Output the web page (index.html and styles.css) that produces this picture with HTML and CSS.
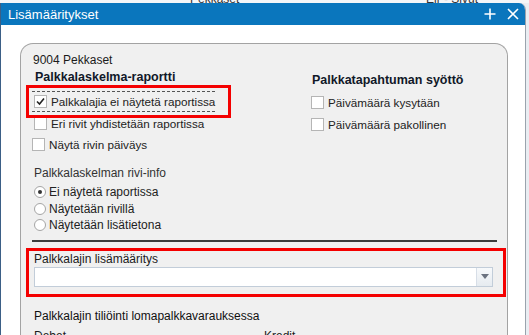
FILE: index.html
```html
<!DOCTYPE html>
<html lang="fi">
<head>
<meta charset="utf-8">
<title>Lisämääritykset</title>
<link rel="stylesheet" href="styles.css">
</head>
<body>
<div class="behind">
  <span class="behind-a">Pekkaset</span>
  <span class="behind-b">Eir - Sivut</span>
</div>
<div class="dialog">
  <div class="titlebar">
    <span class="title">Lisämääritykset</span>
    <span class="actions">
      <svg class="ico" width="12" height="12" viewBox="0 0 12 12"><path d="M6 0.5V11.5M0.5 6H11.5" stroke="#fff" stroke-width="1.6"/></svg>
      <svg class="ico" width="12" height="12" viewBox="0 0 12 12"><path d="M1 1L11 11M11 1L1 11" stroke="#fff" stroke-width="1.6"/></svg>
    </span>
  </div>
  <div class="dbody">
    <div class="panel">
      <div class="code">9004 Pekkaset</div>
      <div class="cols">
        <div class="col-left">
          <div class="heading">Palkkalaskelma-raportti</div>
          <div class="check focus"><span class="box"><svg width="11" height="11" viewBox="0 0 11 11"><path d="M2 5.5L4.5 8L9 2.5" fill="none" stroke="#222" stroke-width="1.6"/></svg></span>Palkkalajia ei näytetä raportissa</div>
          <div class="check"><span class="box"></span>Eri rivit yhdistetään raportissa</div>
          <div class="check shift"><span class="box"></span>Näytä rivin päiväys</div>
          <div class="sub">Palkkalaskelman rivi-info</div>
          <div class="radio"><span class="rb on"></span>Ei näytetä raportissa</div>
          <div class="radio"><span class="rb"></span>Näytetään rivillä</div>
          <div class="radio"><span class="rb"></span>Näytetään lisätietona</div>
        </div>
        <div class="col-right">
          <div class="heading">Palkkatapahtuman syöttö</div>
          <div class="check"><span class="box"></span>Päivämäärä kysytään</div>
          <div class="check"><span class="box"></span>Päivämäärä pakollinen</div>
        </div>
      </div>
      <div class="sep"></div>
      <div class="field-label">Palkkalajin lisämääritys</div>
      <div class="combo">
        <div class="combo-input"></div>
        <div class="combo-btn"><svg width="8" height="5" viewBox="0 0 8 5"><path d="M0 0H8L4 5Z" fill="#6b7280"/></svg></div>
      </div>
      <div class="section">Palkkalajin tiliöinti lomapalkkavarauksessa</div>
      <div class="dk-row"><span class="dk-left">Debet</span><span>Kredit</span></div>
    </div>
  </div>
</div>
<div class="hl hl-one"></div>
<div class="hl hl-two"></div>
</body>
</html>
```

FILE: styles.css
```css
* { box-sizing: border-box; }
html, body { margin: 0; padding: 0; }
body {
  width: 529px;
  height: 335px;
  overflow: hidden;
  background: #e9edf2;
  font-family: "Liberation Sans", Arial, sans-serif;
  font-size: 12px;
  color: #1b1b1b;
  position: relative;
}
.behind {
  height: 3px;
  position: relative;
  overflow: hidden;
  background: #f4f6f8;
  font-size: 12px;
  color: #333;
}
.behind-a { position: absolute; left: 190px; top: -8px; }
.behind-b { position: absolute; left: 426px; top: -8px; }
.dialog {
  width: 526px;
  height: 332px;
  background: #fff;
  border-left: 1px solid #3b5f86;
  border-right: 1px solid #9aa3ad;
  border-top-right-radius: 7px;
  overflow: hidden;
  display: flex;
  flex-direction: column;
}
.titlebar {
  height: 22px;
  flex: none;
  background: #0a76bd;
  color: #fff;
  display: flex;
  align-items: center;
  justify-content: space-between;
  padding: 0 6px 0 7px;
}
.title { font-size: 13px; }
.actions { display: flex; gap: 11px; align-items: center; }
.ico { display: block; }
.dbody {
  flex: 1;
  padding: 18px 17px 0 19px;
}
.panel {
  height: 100%;
  background: #f0f0f0;
  border: 1px solid #a3a3a3;
  border-bottom: none;
  border-radius: 13px 13px 0 0;
  padding: 8px 10px 0 13px;
}
.code { height: 16px; line-height: 16px; margin-left: -1px; }
.cols { display: flex; }
.col-left { width: 277px; display: flex; flex-direction: column; }
.col-right { padding-top: 3px; display: flex; flex-direction: column; }
.heading {
  font-weight: bold;
  font-size: 12.5px;
  color: #101828;
  height: 18px;
  line-height: 18px;
  margin-left: 1px;
  white-space: nowrap;
}
.col-right .heading { margin-bottom: 3px; }
.check {
  display: flex;
  align-items: center;
  height: 22px;
  color: #222;
  white-space: nowrap;
  font-size: 11.7px;
}
.col-right .check { height: 21.5px; }
.check.focus {
  margin-top: 5px;
  height: 21px;
  border-top: 1px dashed #555;
  border-bottom: 1px dashed #555;
  width: max-content;
  margin-left: -2px;
  padding-left: 2px;
}
.check.shift { margin-left: -2px; height: 21px; }
.box {
  width: 13px;
  height: 13px;
  border: 1px solid #b5b5b5;
  background: #fff;
  margin-right: 4px;
  display: flex;
  align-items: center;
  justify-content: center;
  flex: none;
}
.sub { height: 16px; line-height: 16px; margin-top: 10px; margin-bottom: 3px; color: #333; }
.radio { display: flex; align-items: center; height: 16.5px; color: #222; white-space: nowrap; }
.rb {
  width: 12px; height: 12px;
  border: 1px solid #a5a5a5;
  border-radius: 50%;
  background: #fff;
  margin-right: 3px;
  display: flex; align-items: center; justify-content: center;
  flex: none;
}
.rb.on::after {
  content: "";
  width: 4px; height: 4px; border-radius: 50%; background: #333;
}
.sep {
  margin: 6px 0 0 -2px;
  width: 465px;
  height: 2px;
  background: #3c3c3c;
}
.field-label { margin-top: 9px; height: 16px; line-height: 16px; color: #1b1b1b; }
.combo {
  display: flex;
  width: 459px;
  height: 20px;
  margin-top: 0;
  border: 1px solid #c2cdd9;
  background: #fff;
}
.combo-input { flex: 1; }
.combo-btn {
  width: 16px;
  border-left: 1px solid #d7dee7;
  background: linear-gradient(#f7f9fb, #e6ebf0);
  display: flex; align-items: center; justify-content: center;
}
.section { margin-top: 21px; height: 16px; line-height: 16px; color: #111; }
.dk-row { margin-top: 5px; display: flex; }
.dk-left { width: 230px; }
.hl {
  position: absolute;
  border: 3px solid #f40000;
}
.hl-one { left: 26px; top: 85px; width: 205px; height: 33px; }
.hl-two { left: 26px; top: 248px; width: 480px; height: 49px; }
```
